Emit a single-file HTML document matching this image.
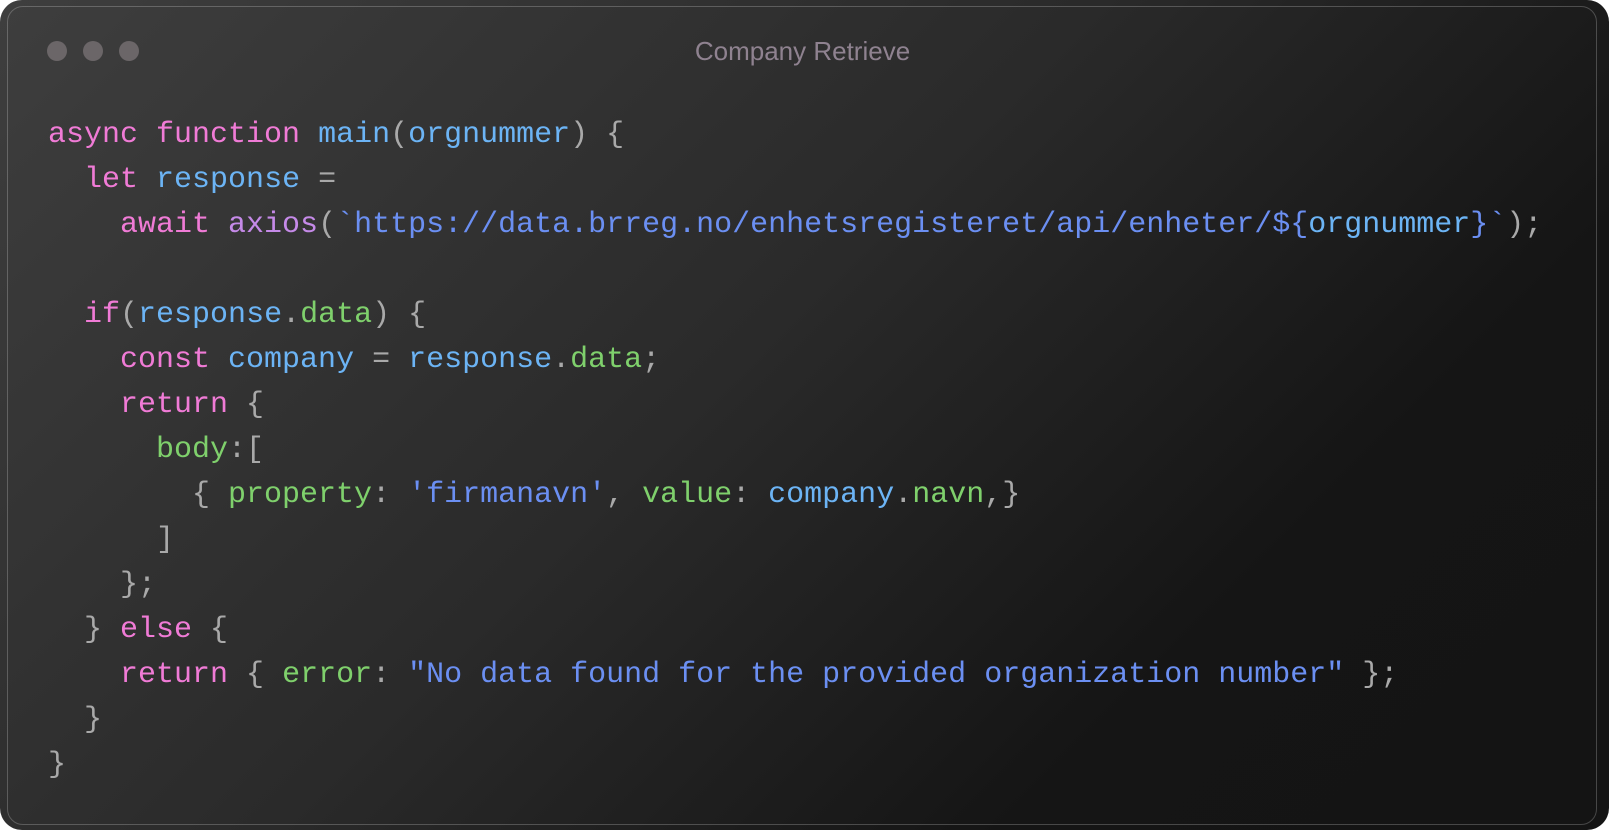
<!DOCTYPE html>
<html><head><meta charset="utf-8"><style>
html,body{margin:0;padding:0;background:#fff;width:1609px;height:830px;overflow:hidden}
.outer{position:absolute;left:0;top:0;width:1609px;height:830px;border-radius:22px;background:linear-gradient(135deg,#3e3e3e 0%,#2a2a2a 45%,#151515 75%,#141414 100%)}
.inner{position:absolute;left:7px;top:6px;width:1590px;height:819px;border:1.5px solid rgba(255,255,255,0.22);border-radius:16px;box-sizing:border-box}
.dot{position:absolute;top:41px;width:20px;height:20px;border-radius:50%;background:#6b6668}
.title{position:absolute;left:-2px;width:1609px;top:36px;text-align:center;font:26px "Liberation Sans",sans-serif;color:#8f8290}
pre{position:absolute;left:48px;top:113px;margin:0;font:30px/45px "Liberation Mono",monospace;color:#a9a9a9}
.k{color:#f07bd6}.b{color:#6cb4f5}.p{color:#c58ae8}.s{color:#6b8ff2}.g{color:#7fd06c}
</style></head><body>
<div class="outer"><div class="inner"></div>
<div class="dot" style="left:47px"></div><div class="dot" style="left:83px"></div><div class="dot" style="left:119px"></div>
<div class="title">Company Retrieve</div>
<pre><span class="k">async</span> <span class="k">function</span> <span class="b">main</span>(<span class="b">orgnummer</span>) {
  <span class="k">let</span> <span class="b">response</span> =
    <span class="k">await</span> <span class="p">axios</span>(<span class="s">`https://data.brreg.no/enhetsregisteret/api/enheter/${</span><span class="b">orgnummer</span><span class="s">}`</span>);

  <span class="k">if</span>(<span class="b">response</span>.<span class="g">data</span>) {
    <span class="k">const</span> <span class="b">company</span> = <span class="b">response</span>.<span class="g">data</span>;
    <span class="k">return</span> {
      <span class="g">body</span>:[
        { <span class="g">property</span>: <span class="s">'firmanavn'</span>, <span class="g">value</span>: <span class="b">company</span>.<span class="g">navn</span>,}
      ]
    };
  } <span class="k">else</span> {
    <span class="k">return</span> { <span class="g">error</span>: <span class="s">"No data found for the provided organization number"</span> };
  }
}</pre>
</div>
</body></html>
